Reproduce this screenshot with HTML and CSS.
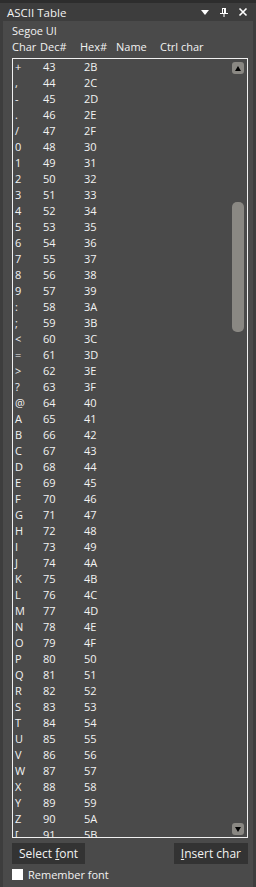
FILE: index.html
```html
<!DOCTYPE html>
<html lang="en">
<head>
    <meta charset="UTF-8">
    <title>ASCII Table</title>
    <link rel="stylesheet" href="styles.css">
</head>
<body>

<div class="window">
    <div class="titlebar">
        <span class="title">ASCII Table</span>
        <div class="title-icons">
            <svg width="10" height="10" viewBox="0 0 10 10"><path d="M1 3 L9 3 L5 8 Z" fill="#fff"/></svg>
            <svg width="10" height="10" viewBox="0 0 10 10"><path d="M3 1 H7 V6 H9 V7 H5.5 V10 H4.5 V7 H1 V6 H3 Z M4 2 V6 H5 V2 Z" fill="#fff"/></svg>
            <svg width="10" height="10" viewBox="0 0 10 10"><path d="M1.5 1.5 L8.5 8.5 M8.5 1.5 L1.5 8.5" stroke="#fff" stroke-width="1.6"/></svg>
        </div>
    </div>

    <div class="panel">
        <div class="font-name">Segoe UI</div>
        <div class="header">
            <span class="col-char">Char</span>
            <span class="col-dec">Dec#</span>
            <span class="col-hex">Hex#</span>
            <span class="col-name">Name</span>
            <span class="col-ctrl">Ctrl char</span>
        </div>

        <div class="list">
            <div id="rows" class="rows"></div>
            <div class="scrollbar">
                <div class="scroll-btn"><svg width="6" height="5" viewBox="0 0 6 5"><path d="M0 5 L3 0 L6 5 Z" fill="#000"/></svg></div>
                <div class="scroll-track">
                    <div class="scroll-thumb"></div>
                </div>
                <div class="scroll-btn"><svg width="6" height="5" viewBox="0 0 6 5"><path d="M0 0 L6 0 L3 5 Z" fill="#000"/></svg></div>
            </div>
        </div>

        <div class="buttons">
            <button class="btn">Select <u>f</u>ont</button>
            <button class="btn"><u>I</u>nsert char</button>
        </div>

        <label class="remember">
            <span class="checkbox"></span>
            Remember font
        </label>
    </div>
</div>

<script>
    const rows = document.getElementById('rows');
    for (let code = 43; code <= 91; code++) {
        const row = document.createElement('div');
        row.className = 'row';
        row.innerHTML = `<span class="col-char">${String.fromCharCode(code).replace('<', '&lt;')}</span>
            <span class="col-dec">${code}</span>
            <span class="col-hex">${code.toString(16).toUpperCase()}</span>`;
        rows.appendChild(row);
    }
</script>

</body>
</html>
```

FILE: styles.css
```css
body {
    margin: 0;
    padding: 0;
    background-color: #3d3d3d;
    font-family: 'Open Sans', 'Noto Sans', sans-serif;
    font-size: 11px;
    color: #f2f2f2;
}
.window {
    height: 887px;
    border-top: 3px solid #2d2d2d;
    box-sizing: border-box;
    display: flex;
    flex-direction: column;
}
.titlebar {
    height: 18px;
    display: flex;
    align-items: center;
    justify-content: space-between;
    padding: 0 7px;
}
.title {
    font-size: 11.5px;
}
.title-icons {
    display: flex;
    gap: 9px;
    padding-right: 1px;
}
.panel {
    flex: 1;
    margin: 0 3px;
    background-color: #4a4a4a;
    padding: 2px 5px 0 9px;
    display: flex;
    flex-direction: column;
}
.font-name {
    height: 16px;
    line-height: 16px;
}
.header,
.row {
    display: flex;
    height: 16px;
    line-height: 16px;
    white-space: nowrap;
}
.header {
    margin-bottom: 3px;
}
.header .col-char { width: 28px; }
.header .col-dec { width: 40px; }
.header .col-hex { width: 36px; }
.header .col-name { width: 44px; }
.list {
    height: 780px;
    box-sizing: border-box;
    border: 1px solid #f0f0f0;
    display: flex;
    overflow: hidden;
}
.rows {
    flex: 1;
    padding-left: 2px;
}
.row .col-char { width: 28px; }
.row .col-dec { width: 41px; }
.scrollbar {
    width: 12px;
    margin: 3px 3px 2px 0;
    display: flex;
    flex-direction: column;
}
.scroll-btn {
    height: 12px;
    background-color: #8a8883;
    border-radius: 3px;
    display: flex;
    align-items: center;
    justify-content: center;
}
.scroll-track {
    flex: 1;
    padding-top: 128px;
}
.scroll-thumb {
    height: 130px;
    background-color: #8a8883;
    border-radius: 5px;
}
.buttons {
    display: flex;
    justify-content: space-between;
    margin-top: 5px;
}
.btn {
    height: 21px;
    padding: 0 7px;
    background-color: #333333;
    color: #f2f2f2;
    border: none;
    font-family: inherit;
    font-size: 12px;
}
.remember {
    display: flex;
    align-items: center;
    gap: 5px;
    margin-top: 4px;
    height: 12px;
}
.checkbox {
    width: 11px;
    height: 11px;
    background-color: #ffffff;
}
```
